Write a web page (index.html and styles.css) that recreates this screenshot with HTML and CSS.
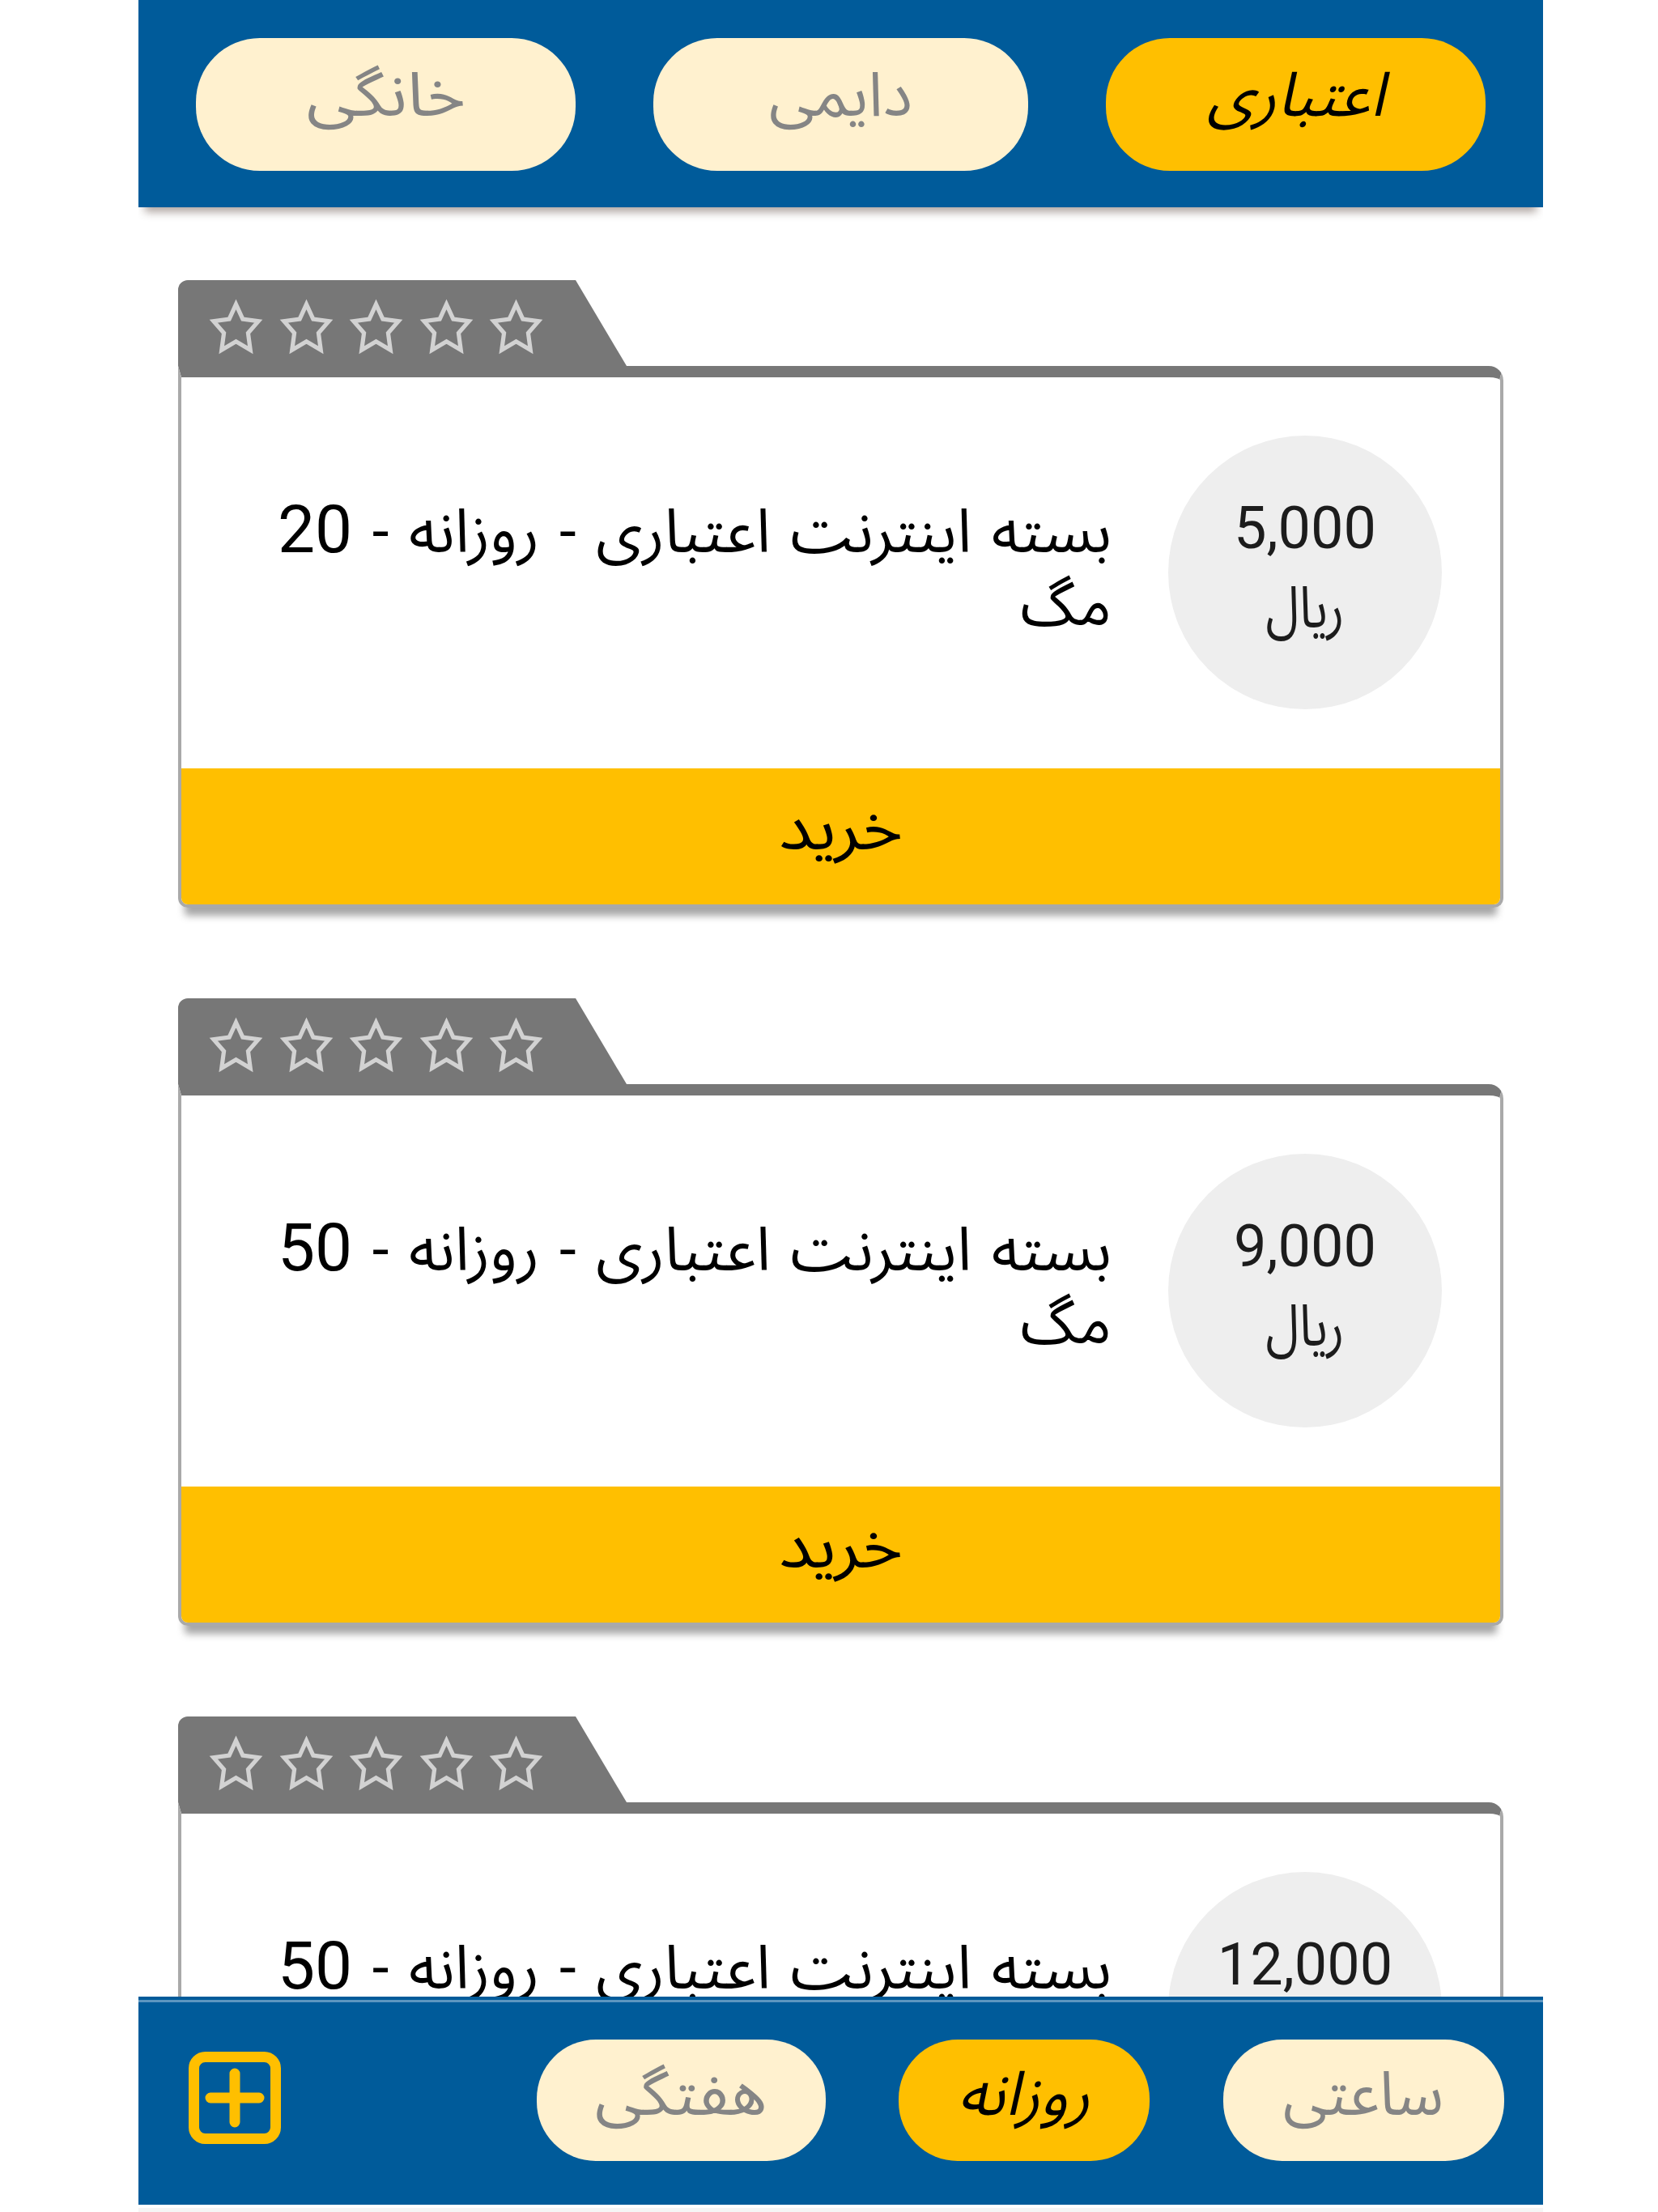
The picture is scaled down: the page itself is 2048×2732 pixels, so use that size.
FILE: index.html
```html
<!DOCTYPE html>
<html lang="fa" dir="rtl">
<head>
    <meta charset="UTF-8">
    <meta name="viewport" content="width=device-width, initial-scale=1.0">
    <title>بسته اینترنت</title>
    <link rel="stylesheet" href="styles.css">
</head>
<body>

    <svg width="0" height="0" class="defs">
        <symbol id="star" viewBox="0 0 66 68">
            <path d="M33 7.5 L41 25 L59.5 27.5 L47.3 41.5 L50 61.5 L33 51.5 L16 61.5 L18.7 41.5 L6.5 27.5 L25 25 Z"/>
        </symbol>
    </svg>

    <div class="app">
        <!-- نوع سیم کارت -->
        <header class="top-bar">
            <button class="pill active"><span>اعتباری</span></button>
            <button class="pill daemi"><span>دایمی</span></button>
            <button class="pill khanegi"><span>خانگی</span></button>
        </header>

        <!-- لیست بسته ها -->
        <main class="list">
            <div class="card">
                <div class="tab">
                    <svg class="star"><use href="#star"/></svg>
                    <svg class="star"><use href="#star"/></svg>
                    <svg class="star"><use href="#star"/></svg>
                    <svg class="star"><use href="#star"/></svg>
                    <svg class="star"><use href="#star"/></svg>
                </div>
                <div class="card-box">
                    <div class="card-body">
                        <div class="price"><span class="amount">5,000</span><span class="unit">ریال</span></div>
                        <div class="title"><p>بسته اینترنت اعتباری - روزانه - <span class="num">20</span></p><p>مگ</p></div>
                    </div>
                    <button class="buy"><span>خرید</span></button>
                </div>
            </div>

            <div class="card">
                <div class="tab">
                    <svg class="star"><use href="#star"/></svg>
                    <svg class="star"><use href="#star"/></svg>
                    <svg class="star"><use href="#star"/></svg>
                    <svg class="star"><use href="#star"/></svg>
                    <svg class="star"><use href="#star"/></svg>
                </div>
                <div class="card-box">
                    <div class="card-body">
                        <div class="price"><span class="amount">9,000</span><span class="unit">ریال</span></div>
                        <div class="title"><p>بسته اینترنت اعتباری - روزانه - <span class="num">50</span></p><p>مگ</p></div>
                    </div>
                    <button class="buy"><span>خرید</span></button>
                </div>
            </div>

            <div class="card">
                <div class="tab">
                    <svg class="star"><use href="#star"/></svg>
                    <svg class="star"><use href="#star"/></svg>
                    <svg class="star"><use href="#star"/></svg>
                    <svg class="star"><use href="#star"/></svg>
                    <svg class="star"><use href="#star"/></svg>
                </div>
                <div class="card-box">
                    <div class="card-body">
                        <div class="price"><span class="amount">12,000</span></div>
                        <div class="title"><p>بسته اینترنت اعتباری - روزانه - <span class="num">50</span></p></div>
                    </div>
                </div>
            </div>
        </main>

        <!-- مدت بسته -->
        <footer class="bottom-bar">
            <button class="pill hourly"><span>ساعتی</span></button>
            <button class="pill daily active"><span>روزانه</span></button>
            <button class="pill weekly"><span>هفتگی</span></button>
            <svg class="add" viewBox="0 0 114 114">
                <rect x="6.5" y="6.5" width="101" height="101" rx="14"/>
                <path d="M57 27 V87 M27 57 H87"/>
            </svg>
        </footer>
        <div class="strip"></div>
    </div>

</body>
</html>
```

FILE: styles.css
```css
* {
    box-sizing: border-box;
}

body {
    margin: 0;
    background-color: #fff;
    font-family: Roboto, "Noto Sans Arabic", "DejaVu Sans", sans-serif;
}

.defs {
    display: block;
}

.app {
    width: 1735px;
    height: 2732px;
    margin-right: 142px;
    display: flex;
    flex-direction: column;
    overflow: hidden;
    background-color: #fff;
}

button {
    border: none;
    padding: 0;
    font-family: inherit;
    line-height: 100px;
}

button span {
    display: inline-block;
}

/* نوار بالا */
.top-bar {
    flex: none;
    height: 256px;
    display: flex;
    align-items: flex-start;
    gap: 96px;
    padding: 47px 71px 0 0;
    background-color: #005b9a;
    box-shadow: 0 14px 10px -8px rgba(80, 60, 50, 0.45);
}

.pill {
    flex: none;
    width: 469px;
    height: 164px;
    padding-bottom: 24px;
    border-radius: 79px;
    background-color: #fff1cf;
    color: #858585;
    font-size: 76px;
}

.pill.daemi {
    width: 463px;
}

.khanegi span {
    transform: scaleX(1.08);
}

.pill.active {
    background-color: #ffbf00;
    color: #000;
    font-style: italic;
}

/* کارت ها */
.list {
    flex: none;
    height: 2210px;
    padding: 90px 49px 0;
    overflow: hidden;
}

.card {
    height: 887px;
}

.tab {
    width: 565px;
    height: 106px;
    margin-right: auto;
    padding: 22px 0 0 37px;
    display: flex;
    justify-content: flex-end;
    gap: 17.6px;
    background-color: #777;
    border-top-left-radius: 12px;
    clip-path: polygon(0 0, 491px 0, 554px 100%, 0 100%);
}

.star {
    flex: none;
    width: 69px;
    height: 71px;
    fill: none;
    stroke: #d2d2d2;
    stroke-width: 5;
}

.card-box {
    height: 669px;
    border: 4px solid #a9a9a9;
    border-top: 14px solid #777;
    border-radius: 0 18px 12px 12px;
    overflow: hidden;
    box-shadow: 0 18px 10px -8px rgba(0, 0, 0, 0.35);
}

.card-body {
    height: 483px;
    padding: 72px 72px 0 0;
    display: flex;
}

.price {
    flex: none;
    width: 338px;
    height: 338px;
    border-radius: 50%;
    background-color: #eee;
    color: #1c1c1c;
    font-size: 72px;
    text-align: center;
    padding-top: 64px;
}

.price span {
    display: block;
    line-height: 101px;
}

.price .unit {
    line-height: 95px;
    transform: scaleX(0.83);
}

.title {
    flex: 1;
    padding: 71px 70px 0 0;
    font-size: 75px;
    word-spacing: 6px;
}

.title p {
    margin: 0;
    line-height: 90px;
    white-space: nowrap;
}

.num {
    font-size: 82px;
}

.buy {
    display: block;
    width: 100%;
    height: 168px;
    padding: 0 2px 21px 0;
    padding-right: 0;
    background-color: #ffbf00;
    color: #000;
    font-size: 78px;
}

.buy span {
    transform: scaleX(1.1);
}

/* نوار پایین */
.bottom-bar {
    flex: none;
    height: 257px;
    display: flex;
    align-items: flex-start;
    padding: 49px 48px 0 62px;
    background-color: #005b9a;
    border-top: 4px solid #005b9a;
    box-shadow: inset 0 3px 0 #5c96c0;
}

.bottom-bar .pill {
    height: 150px;
    padding-bottom: 17px;
    border-radius: 73px;
}

.bottom-bar .hourly {
    width: 347px;
    margin-left: 91px;
}

.hourly span {
    transform: scaleX(0.97);
}

.bottom-bar .daily {
    width: 310px;
    margin-left: 90px;
}

.bottom-bar .weekly {
    width: 357px;
}

.weekly span {
    transform: scaleX(1.04);
}

.add {
    width: 114px;
    height: 114px;
    margin: 15px auto 0 0;
    fill: none;
    stroke: #ffbf00;
    stroke-width: 13;
    stroke-linecap: round;
}

.strip {
    flex: 1;
    margin-top: 4px;
    background-color: #f5f5f5;
}
```
